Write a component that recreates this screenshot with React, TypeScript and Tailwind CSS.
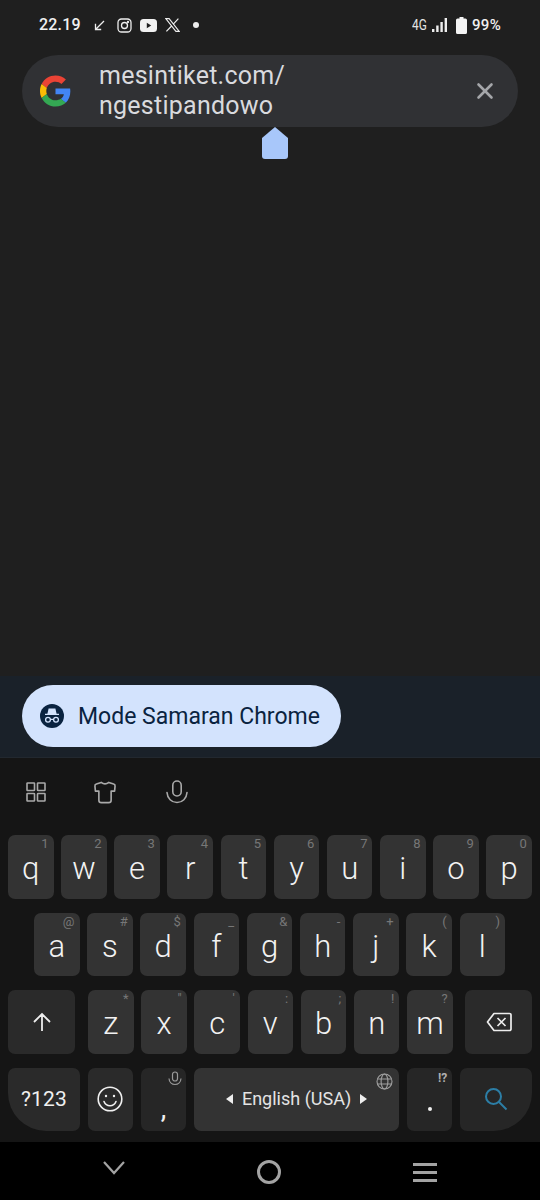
import React from 'react';
import { X } from 'lucide-react';

const FONT = "font-['Roboto',sans-serif]";

type KeyDef = { label: string; hint?: string };

const ROW1: KeyDef[] = [
  { label: 'q', hint: '1' }, { label: 'w', hint: '2' }, { label: 'e', hint: '3' }, { label: 'r', hint: '4' }, { label: 't', hint: '5' },
  { label: 'y', hint: '6' }, { label: 'u', hint: '7' }, { label: 'i', hint: '8' }, { label: 'o', hint: '9' }, { label: 'p', hint: '0' },
];
const ROW2: KeyDef[] = [
  { label: 'a', hint: '@' }, { label: 's', hint: '#' }, { label: 'd', hint: '$' }, { label: 'f', hint: '_' }, { label: 'g', hint: '&' },
  { label: 'h', hint: '-' }, { label: 'j', hint: '+' }, { label: 'k', hint: '(' }, { label: 'l', hint: ')' },
];
const ROW3: KeyDef[] = [
  { label: 'z', hint: '*' }, { label: 'x', hint: '"' }, { label: 'c', hint: "'" }, { label: 'v', hint: ':' },
  { label: 'b', hint: ';' }, { label: 'n', hint: '!' }, { label: 'm', hint: '?' },
];

function Key({ label, hint }: KeyDef) {
  return (
    <div className="relative w-[45.5px] h-[63.5px] shrink-0 rounded-[7px] bg-[#333333] flex items-center justify-center pt-[4px]">
      {hint && <span className="absolute top-[2px] right-[5px] text-[13px] leading-[14px] text-[#777777]">{hint}</span>}
      <span className="text-[31px] leading-none text-[#f2f2f2] font-light">{label}</span>
    </div>
  );
}

function GoogleLogo() {
  return (
    <svg width="31" height="32" viewBox="0 0 48 48">
      <path fill="#EA4335" d="M24 9.5c3.54 0 6.71 1.22 9.21 3.6l6.85-6.85C35.9 2.38 30.47 0 24 0 14.62 0 6.51 5.38 2.56 13.22l7.98 6.19C12.43 13.72 17.74 9.5 24 9.5z" />
      <path fill="#4285F4" d="M46.98 24.55c0-1.57-.15-3.09-.38-4.55H24v9.02h12.94c-.58 2.96-2.26 5.48-4.78 7.18l7.73 6c4.51-4.18 7.09-10.36 7.09-17.65z" />
      <path fill="#FBBC05" d="M10.53 28.59c-.48-1.45-.76-2.99-.76-4.59s.27-3.14.76-4.59l-7.98-6.19C.92 16.46 0 20.12 0 24c0 3.88.92 7.54 2.56 10.78l7.97-6.19z" />
      <path fill="#34A853" d="M24 48c6.48 0 11.93-2.13 15.89-5.81l-7.73-6c-2.15 1.45-4.92 2.3-8.16 2.3-6.26 0-11.57-4.22-13.47-9.91l-7.98 6.19C6.51 42.62 14.62 48 24 48z" />
    </svg>
  );
}

function StatusBar() {
  return (
    <div className="h-[55px] pl-[39px] pr-[39px] pb-[5px] flex items-center justify-between text-[#f1f1f1]">
      <div className="flex items-center">
        <span className="text-[16px] font-medium leading-none tracking-[0.2px]">22.19</span>
        <svg className="ml-[13px]" width="11" height="11" viewBox="0 0 11 11" fill="none" stroke="#eeeeee" strokeWidth="1.3">
          <path d="M10 1 1.500 9.500M1.500 3.800v5.700h5.700" />
        </svg>
        <svg className="ml-[12px]" width="15" height="15" viewBox="0 0 15 15" fill="none" stroke="#eeeeee" strokeWidth="1.3">
          <rect x="1" y="1" width="13" height="13" rx="3.5" />
          <circle cx="7.500" cy="7.500" r="3" />
          <circle cx="11" cy="4" r=".5" fill="#eeeeee" />
        </svg>
        <svg className="ml-[8px]" width="17" height="13" viewBox="0 0 17 13">
          <rect width="17" height="13" rx="3.500" fill="#f1f1f1" />
          <path d="M6.800 3.800v5.400l4.400-2.700z" fill="#1f1f1f" />
        </svg>
        <svg className="ml-[8px]" width="15" height="14" viewBox="0 0 15 14" fill="none" stroke="#eeeeee">
          <path d="M.8.6h3.300l10.100 12.800h-3.300z" strokeWidth="1.100" />
          <path d="M13.400.6 8.300 6.200M6.600 8 1.400 13.400" strokeWidth="1.200" />
        </svg>
        <div className="ml-[13px] w-[6px] h-[6px] rounded-full bg-[#eeeeee]" />
      </div>
      <div className="flex items-center">
        <span className="text-[14px] leading-none text-[#e4e4e4] scale-x-85 origin-left w-[16px]">4G</span>
        <svg className="ml-[4px]" width="15" height="14" viewBox="0 0 15 14" fill="#eeeeee">
          <rect x="0" y="11" width="2.400" height="3" />
          <rect x="4.200" y="7.500" width="2.400" height="6.500" />
          <rect x="8.400" y="4" width="2.400" height="10" />
          <rect x="12.600" y="0" width="2.400" height="14" />
        </svg>
        <svg className="ml-[9px]" width="11" height="17" viewBox="0 0 11 17" fill="#f4f4f4">
          <path d="M3.500 0h4v1.400H9.400A1.600 1.600 0 0 1 11 3v12.400A1.600 1.600 0 0 1 9.400 17H1.600A1.600 1.600 0 0 1 0 15.400V3a1.600 1.600 0 0 1 1.600-1.600h1.900z" />
        </svg>
        <span className="ml-[5px] text-[15px] leading-none font-medium tracking-[0.3px]">99%</span>
      </div>
    </div>
  );
}

function AddressBar() {
  return (
    <div className="relative mx-[22px] h-[72px] rounded-full bg-[#303134] flex items-center pl-[18px] pr-[20px]">
      <GoogleLogo />
      <div className="ml-[28px] flex-1 text-[25px] leading-[30px] tracking-[0.25px] text-[#d9dade]">
        <div>mesintiket.com/</div>
        <div>ngestipandowo</div>
      </div>
      <X size={26} strokeWidth={2.400} className="text-[#a4a6a9]" />
      {/* text cursor handle */}
      <svg className="absolute left-[240px] top-[72px]" width="26" height="32" viewBox="0 0 26 32">
        <path d="M13 0 26 11v18a3 3 0 0 1-3 3H3a3 3 0 0 1-3-3V11z" fill="#a8c7fa" />
      </svg>
    </div>
  );
}

function IncognitoChip() {
  return (
    <div className="h-[82px] bg-[#1a2129] flex items-center pl-[22px] pb-[1px] border-b border-[#22282f]">
      <div className="w-[319px] h-[62px] rounded-full bg-[#d3e3fd] flex items-center pl-[18px]">
        <svg width="24" height="24" viewBox="0 0 24 24">
          <circle cx="12" cy="12" r="12" fill="#0a2340" />
          <path d="M8.600 4.500h6.800l1.200 5.200H19V11H5V9.700h2.400z" fill="#d3e3fd" />
          <circle cx="8" cy="15.800" r="2.400" fill="none" stroke="#d3e3fd" strokeWidth="1.300" />
          <circle cx="16" cy="15.800" r="2.400" fill="none" stroke="#d3e3fd" strokeWidth="1.300" />
          <path d="M10.400 15.400h3.200" stroke="#d3e3fd" strokeWidth="1.200" />
        </svg>
        <span className="ml-[14px] text-[23px] leading-none text-[#0a2340]">Mode Samaran Chrome</span>
      </div>
    </div>
  );
}

function Toolbar() {
  return (
    <div className="h-[77px] flex items-center pb-[9px] pl-[26px] text-[#a9a9a9]">
      <svg width="20" height="20" viewBox="0 0 20 20" fill="none" stroke="currentColor" strokeWidth="1.600">
        <rect x="1" y="1" width="7.500" height="7.500" rx=".6" />
        <rect x="11.500" y="1" width="7.500" height="7.500" rx=".6" />
        <rect x="1" y="11.500" width="7.500" height="7.500" rx=".6" />
        <rect x="11.500" y="11.500" width="7.500" height="7.500" rx=".6" />
      </svg>
      <svg className="ml-[47px]" width="24" height="23" viewBox="0 0 24 24" fill="none" stroke="currentColor" strokeWidth="1.700" strokeLinejoin="round">
        <path d="M8 1.500 3 3.200a2 2 0 0 0-1.500 2.200L2 10.500h3.600V20a2.600 2.600 0 0 0 2.600 2.600h7.600a2.600 2.600 0 0 0 2.600-2.600v-9.500H22l.5-5.100A2 2 0 0 0 21 3.200l-5-1.700q-4 3-8 0z" />
      </svg>
      <svg className="ml-[49px]" width="22" height="24" viewBox="0 0 22 24" fill="none" stroke="currentColor" strokeWidth="1.600" strokeLinecap="round">
        <rect x="6.800" y="1" width="8.400" height="15" rx="4.200" />
        <path d="M1 12.500c.4 6 4.600 10 10 10s9.600-4 10-10" />
      </svg>
    </div>
  );
}

function Keyboard() {
  return (
    <div className="h-[384px] bg-[#151515] flex flex-col">
      <Toolbar />
      <div className="flex flex-col gap-[14px] px-[8px]">
        <div className="flex justify-between">
          {ROW1.map(k => <Key key={k.label} {...k} />)}
        </div>
        <div className="flex justify-center gap-[7.700px] pr-[1px]">
          {ROW2.map(k => <Key key={k.label} {...k} />)}
        </div>
        <div className="flex items-center">
          <div className="w-[67px] h-[63.500px] rounded-[7px] bg-[#2a2a2a] flex items-center justify-center">
            <svg width="20" height="20" viewBox="0 0 20 20" fill="none" stroke="#ededed" strokeWidth="1.800">
              <path d="M10 19V2M2 10l8-8 8 8" />
            </svg>
          </div>
          <div className="ml-[13px] flex gap-[7.700px]">
            {ROW3.map(k => <Key key={k.label} {...k} />)}
          </div>
          <div className="ml-auto w-[67px] h-[63.500px] rounded-[7px] bg-[#2a2a2a] flex items-center justify-center">
            <svg width="26" height="20" viewBox="0 0 26 20" fill="none" stroke="#ededed" strokeWidth="1.700">
              <path d="M8 1.500h15.500a1.500 1.500 0 0 1 1.500 1.500v14a1.500 1.500 0 0 1-1.500 1.500H8L1.500 10z" strokeLinejoin="round" />
              <path d="m11.500 6 8 8M19.500 6l-8 8" />
            </svg>
          </div>
        </div>
        <div className="flex items-center gap-[7.700px]">
          <div className="w-[72px] h-[63.500px] rounded-[7px] rounded-bl-[38px] bg-[#2a2a2a] flex items-center justify-center text-[21px] text-[#f0f0f0] tracking-[0.2px]">?123</div>
          <div className="w-[45.500px] h-[63.500px] rounded-[7px] bg-[#2a2a2a] flex items-center justify-center">
            <svg width="26" height="26" viewBox="0 0 26 26" fill="none" stroke="#f0f0f0" strokeWidth="1.600" strokeLinecap="round">
              <circle cx="13" cy="13" r="11.800" />
              <path d="M7 15.500c1.200 3 3.500 4.300 6 4.300s4.800-1.300 6-4.300" />
              <circle cx="9" cy="10" r="1.200" fill="#f0f0f0" stroke="none" />
              <circle cx="17" cy="10" r="1.200" fill="#f0f0f0" stroke="none" />
            </svg>
          </div>
          <div className="relative w-[45.500px] h-[63.500px] rounded-[7px] bg-[#262626] flex items-end justify-center pb-[12px]">
            <svg className="absolute top-[3px] right-[4px]" width="14" height="16" viewBox="0 0 14 16" fill="none" stroke="#9a9a9a" strokeWidth="1.200">
              <rect x="4.500" y="1" width="5" height="9" rx="2.500" />
              <path d="M1 7.500c.2 3.500 2.800 6 6 6s5.800-2.500 6-6" />
            </svg>
            <span className="text-[28px] leading-[20px] text-[#f0f0f0]">,</span>
          </div>
          <div className="relative w-[205px] h-[63.500px] rounded-[7px] bg-[#333333] flex items-center justify-center text-[#e4e4e4]">
            <svg width="7" height="10" viewBox="0 0 7 10" fill="#eeeeee"><path d="M7 0v10L0 5z" /></svg>
            <span className="mx-[9px] text-[18px] leading-none">English (USA)</span>
            <svg width="7" height="10" viewBox="0 0 7 10" fill="#eeeeee"><path d="M0 0v10l7-5z" /></svg>
            <svg className="absolute top-[5px] right-[6px]" width="17" height="17" viewBox="0 0 17 17" fill="none" stroke="#a0a0a0" strokeWidth="1.100">
              <circle cx="8.500" cy="8.500" r="7.500" />
              <ellipse cx="8.500" cy="8.500" rx="3.400" ry="7.500" />
              <path d="M1.500 6h14M1.500 11h14" />
            </svg>
          </div>
          <div className="relative w-[45.500px] h-[63.500px] rounded-[7px] bg-[#262626] flex items-end justify-center pb-[20px]">
            <span className="absolute top-[3px] right-[5px] text-[12px] leading-[14px] font-bold text-[#b0b0b0]">!?</span>
            <div className="w-[4px] h-[4px] rounded-full bg-[#f0f0f0]" />
          </div>
          <div className="w-[72px] h-[63.500px] rounded-[7px] rounded-br-[38px] bg-[#262626] flex items-center justify-center">
            <svg width="24" height="24" viewBox="0 0 24 24" fill="none" stroke="#2c7ea6" strokeWidth="2">
              <circle cx="9.500" cy="9.500" r="7.500" />
              <path d="m15 15 7.500 7.500" />
            </svg>
          </div>
        </div>
      </div>
    </div>
  );
}

function NavBar() {
  return (
    <div className="h-[58px] bg-black flex items-center justify-between pl-[103px] pr-[103px] pt-[2px]">
      <svg className="mb-[8px]" width="22" height="14" viewBox="0 0 22 14" fill="none" stroke="#a3a3a3" strokeWidth="2.200">
        <path d="m1 1 10 11L21 1" />
      </svg>
      <div className="w-[24px] h-[24px] rounded-full border-[3px] border-[#a3a3a3]" />
      <div className="flex flex-col gap-[5px]">
        <div className="w-[24px] h-[3px] bg-[#a3a3a3]" />
        <div className="w-[24px] h-[3px] bg-[#a3a3a3]" />
        <div className="w-[24px] h-[3px] bg-[#a3a3a3]" />
      </div>
    </div>
  );
}

export default function App() {
  return (
    <div className={`w-[540px] h-[1200px] overflow-hidden bg-[#1f1f1f] flex flex-col ${FONT}`}>
      <StatusBar />
      <AddressBar />
      <div className="flex-1" />
      <IncognitoChip />
      <Keyboard />
      <NavBar />
    </div>
  );
}
